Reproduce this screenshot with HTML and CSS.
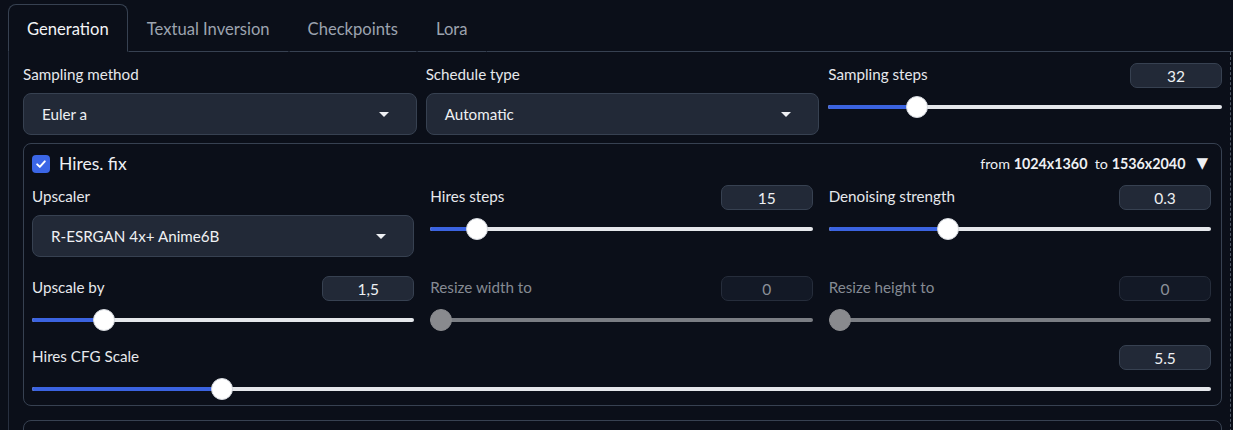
FILE: index.html
```html
<!DOCTYPE html>
<html>
<head>
<meta charset="utf-8">
<link rel="stylesheet" href="styles.css">
</head>
<body>
<div class="tabs">
  <div class="tab-nav">
    <div class="tab active">Generation</div>
    <div class="tab">Textual Inversion</div>
    <div class="tab">Checkpoints</div>
    <div class="tab">Lora</div>
    <div class="tab-fill"></div>
  </div>
  <div class="panel">
    <div class="grid3 gap-top">
      <div class="field">
        <div class="lbl dd-lbl">Sampling method</div>
        <div class="dropdown"><span>Euler a</span><span class="caret"></span></div>
      </div>
      <div class="field">
        <div class="lbl dd-lbl">Schedule type</div>
        <div class="dropdown"><span>Automatic</span><span class="caret"></span></div>
      </div>
      <div class="field">
        <div class="slider-head"><span class="lbl">Sampling steps</span><div class="num">32</div></div>
        <div class="slider"><div class="track"><div class="fill" style="width:22.5%"></div><div class="thumb" style="left:22.5%"></div></div></div>
      </div>
    </div>

    <div class="accordion">
      <div class="acc-head">
        <div class="acc-title">
          <span class="checkbox"><svg width="12" height="12" viewBox="0 0 12 12"><polyline points="2.2,6.4 4.8,8.9 9.8,3.4" fill="none" stroke="#fff" stroke-width="2" stroke-linecap="round" stroke-linejoin="round"/></svg></span>
          <span class="acc-name">Hires. fix</span>
        </div>
        <div class="acc-info">from <b>1024x1360</b>&nbsp; to <b>1536x2040</b><span class="tri">▼</span></div>
      </div>

      <div class="grid3i">
        <div class="field">
          <div class="lbl dd-lbl">Upscaler</div>
          <div class="dropdown"><span>R-ESRGAN 4x+ Anime6B</span><span class="caret"></span></div>
        </div>
        <div class="field">
          <div class="slider-head"><span class="lbl">Hires steps</span><div class="num">15</div></div>
          <div class="slider"><div class="track"><div class="fill" style="width:12.3%"></div><div class="thumb" style="left:12.3%"></div></div></div>
        </div>
        <div class="field">
          <div class="slider-head"><span class="lbl">Denoising strength</span><div class="num">0.3</div></div>
          <div class="slider"><div class="track"><div class="fill" style="width:31.2%"></div><div class="thumb" style="left:31.2%"></div></div></div>
        </div>
      </div>

      <div class="grid3i row2">
        <div class="field">
          <div class="slider-head"><span class="lbl">Upscale by</span><div class="num">1,5</div></div>
          <div class="slider"><div class="track"><div class="fill" style="width:18.8%"></div><div class="thumb" style="left:18.8%"></div></div></div>
        </div>
        <div class="field disabled">
          <div class="slider-head"><span class="lbl">Resize width to</span><div class="num">0</div></div>
          <div class="slider"><div class="track"><div class="thumb" style="left:2.7%"></div></div></div>
        </div>
        <div class="field disabled">
          <div class="slider-head"><span class="lbl">Resize height to</span><div class="num">0</div></div>
          <div class="slider"><div class="track"><div class="thumb" style="left:2.9%"></div></div></div>
        </div>
      </div>

      <div class="row3 field">
        <div class="slider-head"><span class="lbl">Hires CFG Scale</span><div class="num">5.5</div></div>
        <div class="slider"><div class="track"><div class="fill" style="width:16.1%"></div><div class="thumb" style="left:16.1%"></div></div></div>
      </div>
    </div>

    <div class="accordion next"></div>
  </div>
</div>
</body>
</html>
```

FILE: styles.css
```css
* { box-sizing: border-box; }
html, body { margin: 0; padding: 0; }
body {
  width: 1233px;
  height: 430px;
  overflow: hidden;
  background: #0b0f19;
  color: #e5e7eb;
  font-family: Lato, "Liberation Sans", sans-serif;
}
.tabs { padding: 4px 0 0 8px; }
.tab-nav { display: flex; align-items: flex-end; }
.tab {
  height: 48px;
  padding: 1px 18px 0 18px;
  display: flex;
  align-items: center;
  font-size: 16.6px;
  color: #9ca3af;
  border: 1px solid transparent;
  border-bottom: 1px solid #374151;
}
.tab.active {
  color: #f3f4f6;
  border-color: #374151;
  border-bottom-color: transparent;
  border-radius: 8px 8px 0 0;
}
.tab-fill { flex: 1; height: 48px; border-bottom: 1px solid #374151; }

.panel {
  margin-right: 2px;
  height: 400px;
  border-left: 1px solid #283040;
  border-right: 1px dashed #4b5563;
  padding: 11px 8px 0 14px;
}
.grid3 { display: grid; grid-template-columns: repeat(3, 1fr); column-gap: 9px; }
.grid3i { display: grid; grid-template-columns: repeat(3, 1fr); column-gap: 16px; }
.row2 { margin-top: 19px; }
.row3 { margin-top: 16px; }

.lbl { font-size: 15.2px; color: #e6e8ec; white-space: nowrap; line-height: 22px; }
.dd-lbl { height: 22px; margin-bottom: 8px; }
.dropdown {
  height: 42px;
  background: #222937;
  border: 1px solid #374151;
  border-radius: 8px;
  display: flex;
  align-items: center;
  justify-content: space-between;
  padding: 0 27px 0 18px;
  font-size: 15.2px;
  color: #eef0f3;
}
.caret {
  width: 0; height: 0;
  border-left: 5px solid transparent;
  border-right: 5px solid transparent;
  border-top: 5px solid #eef0f3;
}
.slider-head {
  height: 25px;
  display: flex;
  align-items: flex-start;
  justify-content: space-between;
}
.num {
  width: 92px;
  height: 25px;
  background: #222937;
  border: 1px solid #374151;
  border-radius: 7px;
  display: flex;
  align-items: center;
  justify-content: center;
  font-size: 15.5px;
  color: #eef0f3;
}
.slider { height: 28px; padding-top: 17px; }
.track {
  position: relative;
  height: 4px;
  border-radius: 2px;
  background: #e5e7eb;
}
.fill {
  height: 4px;
  border-radius: 2px;
  background: #3b63e0;
}
.thumb {
  position: absolute;
  top: 50%;
  width: 22px;
  height: 22px;
  border-radius: 50%;
  background: #ffffff;
  border: 1px solid #d4d7dd;
  transform: translate(-50%, -50%);
}
.disabled .lbl { color: #858a93; }
.disabled .num { background: #131926; border-color: #262d3b; color: #8b9099; }
.disabled .track { background: #7b7e84; }
.disabled .thumb { background: #898a8e; border-color: #898a8e; }

.accordion {
  margin-top: 8px;
  border: 1px solid #374151;
  border-radius: 8px;
  padding: 8px 10px 7px 8px;
}
.acc-head {
  height: 24px;
  margin-bottom: 9px;
  display: flex;
  align-items: center;
  justify-content: space-between;
}
.acc-title { display: flex; align-items: center; }
.checkbox {
  width: 18px;
  height: 18px;
  border-radius: 4px;
  background: #3b66e6;
  display: flex;
  align-items: center;
  justify-content: center;
}
.acc-name { margin-left: 9px; font-size: 17.5px; color: #eef0f3; margin-top: -2px; }
.acc-info { font-size: 14.3px; color: #eef0f3; display: flex; align-items: center; margin-right: 3px; white-space: pre; margin-top: -2px; }
.acc-info b { font-weight: 700; }
.tri { margin-left: 11px; font-size: 15px; font-family: "DejaVu Sans", sans-serif; }
.accordion.next { margin-top: 14px; height: 40px; }
```
